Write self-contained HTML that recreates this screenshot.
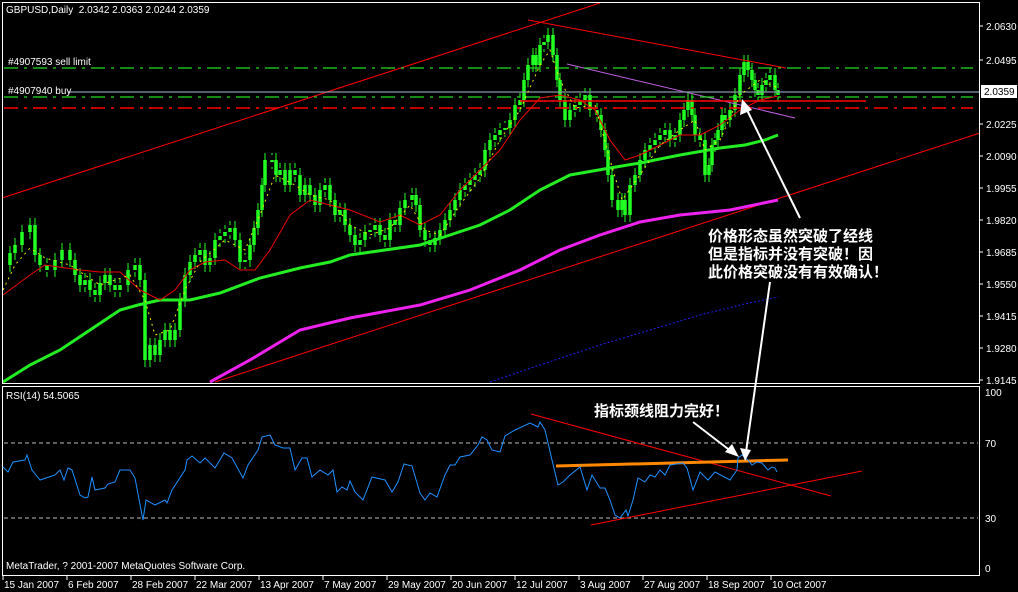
<!DOCTYPE html>
<html><head><meta charset="utf-8"><style>
html,body{margin:0;padding:0;background:#000;width:1018px;height:592px;overflow:hidden}
svg{display:block}
text{font-family:"Liberation Sans","Noto Sans CJK SC",sans-serif}
</style></head><body>
<svg width="1018" height="592" xmlns="http://www.w3.org/2000/svg">
<rect width="1018" height="592" fill="#000"/>
<defs>
<path id="cb" d="M10 265V253 M15 253V245 M22 245V232 M30 232V225 M35 225V255 M40 255V265 M47 265V270 M55 270V260 M62 260V250 M70 250V260 M75 260V275 M80 275V285 M85 285V280 M90 280V290 M95 290V295 M100 295V283 M105 283V275 M110 275V285 M115 285V290 M120 290V285 M128 285V270 M135 270V265 M140 265V280 M145 280V360 M150 360V345 M155 345V355 M160 355V340 M165 340V330 M170 330V340 M175 340V330 M180 330V300 M185 300V275 M190 275V262 M195 262V255 M200 255V250 M205 250V265 M210 265V258 M215 258V240 M220 240V236 M225 236V232 M230 232V228 M235 228V240 M240 240V262 M245 262V260 M250 260V245 M254 245V228 M258 228V210 M262 210V185 M265 185V160 M272 160V162 M276 160V175 M280 175V170 M285 170V185 M290 185V170 M295 170V175 M300 175V195 M305 195V185 M310 185V195 M315 195V205 M320 205V190 M325 190V185 M330 185V200 M335 200V215 M340 215V210 M345 210V225 M350 225V235 M355 235V245 M360 245V240 M365 240V232 M370 232V230 M375 230V225 M380 225V235 M385 235V240 M390 240V220 M395 220V225 M400 225V208 M405 208V200 M412 200V195 M416 195V205 M420 205V230 M425 230V240 M430 240V245 M435 245V238 M440 238V230 M445 230V220 M450 220V210 M455 210V200 M460 200V190 M465 190V185 M470 185V180 M475 180V175 M480 175V170 M485 170V150 M490 150V140 M495 140V135 M500 135V130 M505 130V128 M510 128V120 M515 120V105 M520 105V100 M524 100V80 M528 80V65 M533 65V55 M536 55V65 M540 65V45 M544 45V42 M548 42V35 M553 35V55 M557 55V80 M560 80V100 M565 100V120 M570 120V110 M575 110V105 M580 105V100 M585 100V95 M590 95V110 M597 110V115 M601 115V130 M605 130V150 M608 150V175 M612 175V200 M618 200V210 M622 210V200 M625 200V215 M630 215V185 M635 185V175 M640 175V160 M645 160V150 M650 150V145 M655 145V140 M660 140V135 M665 135V130 M670 130V140 M675 140V135 M680 135V120 M684 120V110 M688 110V100 M692 100V115 M695 115V135 M700 135V140 M705 140V175 M709 175V165 M712 165V145 M715 145V140 M718 140V130 M722 130V115 M725 115V120 M730 120V110 M735 110V95 M740 95V75 M744 75V62 M748 62V70 M752 70V80 M755 80V90 M758 90V95 M762 95V85 M766 85V80 M770 80V75 M775 75V90 M778 90V95"/>
</defs>
<g stroke="#2f2" fill="none">
<use href="#cb" stroke-width="1" transform="translate(0,-7)"/>
<use href="#cb" stroke-width="1" transform="translate(0,7)"/>
<use href="#cb" stroke-width="1"/>
<use href="#cb" stroke-width="3.5"/>
</g>
<line x1="2" y1="198" x2="600" y2="3" stroke="#f00" stroke-width="1"/>
<line x1="215" y1="382" x2="980" y2="133" stroke="#f00" stroke-width="1"/>
<line x1="528" y1="20" x2="786" y2="68" stroke="#f00" stroke-width="1"/>
<line x1="567" y1="64" x2="795" y2="118" stroke="#c060e0" stroke-width="1"/>
<line x1="4" y1="68" x2="973" y2="68" stroke="#2d2" stroke-width="1.3" stroke-dasharray="14,6,3,6"/>
<line x1="68" y1="92" x2="980" y2="92" stroke="#8898a8" stroke-width="1.2"/>
<line x1="4" y1="97" x2="973" y2="97" stroke="#2d2" stroke-width="1.3" stroke-dasharray="14,6,3,6"/>
<line x1="4" y1="108" x2="973" y2="108" stroke="#f00" stroke-width="1.5" stroke-dasharray="14,6,3,6"/>
<line x1="520" y1="101" x2="866" y2="101" stroke="#f00" stroke-width="1.5"/>
<polyline fill="none" stroke="#2e2" stroke-width="3" points="3,382 30,365 60,350 90,330 120,310 138,305 160,300 190,300 220,293 260,278 300,268 330,262 350,255 420,245 450,235 480,225 510,210 540,190 570,175 610,168 640,163 680,155 720,148 745,145 765,140 778,135"/>
<polyline fill="none" stroke="#e2e" stroke-width="3" points="210,382 250,360 300,330 350,318 420,305 470,290 520,270 560,250 600,235 640,222 680,215 730,210 778,200"/>
<polyline fill="none" stroke="#22e" stroke-width="1" stroke-dasharray="2,2" points="490,382 540,365 600,345 650,330 700,315 740,305 778,297"/>
<polyline fill="none" stroke="#e00" stroke-width="1" points="3,295 30,275 45,265 80,270 100,272 120,272 140,290 160,300 175,290 190,270 205,262 225,260 240,270 255,270 270,250 290,215 310,200 330,205 350,210 380,222 400,215 420,225 440,215 460,190 480,170 500,150 520,120 540,98 560,95 580,100 595,110 610,140 625,160 640,155 660,145 680,135 700,135 720,125 740,110 760,100 778,96"/>
<polyline fill="none" stroke="#ee0" stroke-width="1" stroke-dasharray="2,4" points="3,290 15,265 30,248 45,258 70,265 100,285 130,275 145,300 155,335 170,330 185,290 200,262 225,240 245,250 260,215 275,175 295,185 310,195 330,200 350,225 370,235 390,228 410,205 425,230 440,235 460,205 480,178 500,140 520,110 540,65 550,50 560,80 575,108 595,105 610,160 622,200 640,175 660,145 680,130 695,120 705,150 720,140 740,95 760,80 778,88"/>
<rect x="2.5" y="2.5" width="977" height="381" fill="none" stroke="#fff"/>
<rect x="2.5" y="386.5" width="977" height="189" fill="none" stroke="#fff"/>
<text x="6" y="13" fill="#fff" font-size="10">GBPUSD,Daily&#160; 2.0342 2.0363 2.0244 2.0359</text>
<text x="8" y="65" fill="#fff" font-size="10">#4907593 sell limit</text>
<text x="8" y="94" fill="#fff" font-size="10">#4907940 buy</text>
<g stroke="#fff"><path d="M980 26h3M980 60h3M980 124h3M980 156h3M980 188h3M980 220h3M980 252h3M980 284h3M980 316h3M980 348h3M980 380h3"/></g>
<g fill="#fff" font-size="10">
<text x="986" y="30">2.0630</text><text x="986" y="64">2.0495</text><text x="986" y="128">2.0225</text><text x="986" y="160">2.0090</text><text x="986" y="192">1.9955</text><text x="986" y="224">1.9820</text><text x="986" y="256">1.9685</text><text x="986" y="288">1.9550</text><text x="986" y="320">1.9415</text><text x="986" y="352">1.9280</text><text x="986" y="384">1.9145</text>
</g>
<rect x="981" y="85" width="36" height="13" fill="#fff"/>
<text x="984" y="95" fill="#000" font-size="10">2.0359</text>
<line x1="4" y1="443" x2="978" y2="443" stroke="#bbb" stroke-dasharray="4,3"/>
<line x1="4" y1="518" x2="978" y2="518" stroke="#bbb" stroke-dasharray="4,3"/>
<text x="6" y="399" fill="#fff" font-size="10">RSI(14) 54.5065</text>
<text x="985" y="396" fill="#fff" font-size="10">100</text>
<text x="985" y="447" fill="#fff" font-size="10">70</text>
<text x="985" y="522" fill="#fff" font-size="10">30</text>
<text x="985" y="572" fill="#fff" font-size="10">0</text>
<line x1="531" y1="414" x2="831" y2="496" stroke="#f00"/>
<line x1="591" y1="525" x2="862" y2="471" stroke="#f00"/>
<line x1="556" y1="466" x2="788" y2="460" stroke="#f80" stroke-width="3"/>
<polyline fill="none" stroke="#1e90ff" stroke-width="1" points="3,467 8,472 13,462 25,460 27,455 32,470 40,480 55,475 60,470 64,480 68,468 72,470 80,495 85,498 88,497 92,477 95,490 105,488 108,484 115,482 120,470 130,470 135,478 142,515 143,520 146,500 155,505 165,500 167,503 172,490 185,470 187,460 192,456 200,463 205,458 215,468 224,453 232,458 243,478 248,465 258,450 262,437 270,435 275,445 283,448 290,448 295,470 302,458 307,458 312,477 320,470 328,475 333,470 337,492 342,487 347,490 350,481 355,492 363,500 372,477 385,480 392,492 398,482 404,464 412,466 420,493 425,500 430,493 437,497 445,475 450,465 455,465 460,457 470,455 478,445 482,437 487,440 492,450 500,452 505,436 515,430 530,423 538,427 540,422 545,430 552,460 558,485 563,482 570,475 580,467 587,490 592,475 600,488 605,488 610,500 615,515 620,518 626,510 628,516 633,500 638,478 645,482 650,475 655,477 660,470 665,475 670,465 683,463 687,468 693,490 700,472 708,480 715,472 730,480 737,470 738,458 742,455 748,460 752,465 757,462 762,463 768,470 772,467 775,468 777,472"/>
<text x="6" y="569" fill="#fff" font-size="10">MetaTrader, ? 2001-2007 MetaQuotes Software Corp.</text>
<g stroke="#fff"><path d="M3 576v4M67 576v4M131 576v4M195 576v4M259 576v4M323 576v4M387 576v4M451 576v4M515 576v4M579 576v4M643 576v4M707 576v4M771 576v4"/></g>
<g fill="#fff" font-size="10">
<text x="4" y="588">15 Jan 2007</text><text x="68" y="588">6 Feb 2007</text><text x="132" y="588">28 Feb 2007</text><text x="196" y="588">22 Mar 2007</text><text x="260" y="588">13 Apr 2007</text><text x="324" y="588">7 May 2007</text><text x="388" y="588">29 May 2007</text><text x="452" y="588">20 Jun 2007</text><text x="516" y="588">12 Jul 2007</text><text x="580" y="588">3 Aug 2007</text><text x="644" y="588">27 Aug 2007</text><text x="708" y="588">18 Sep 2007</text><text x="772" y="588">10 Oct 2007</text>
</g>
<g fill="#fff" font-size="15" font-weight="bold">
<text x="708" y="241">价格形态虽然突破了经线</text>
<text x="708" y="259">但是指标并没有突破！因</text>
<text x="708" y="277">此价格突破没有有效确认！</text>
<text x="594" y="416">指标颈线阻力完好！</text>
</g>
<g stroke="#fff" stroke-width="2" fill="#fff">
<line x1="800" y1="218" x2="746" y2="108"/>
<polygon points="742,99 740,115 752,110" stroke="none"/>
<line x1="770" y1="282" x2="746" y2="452"/>
<polygon points="745,461 740,448 751,450" stroke="none"/>
<line x1="693" y1="422" x2="732" y2="452"/>
<polygon points="739,457 725,452 732,444" stroke="none"/>
</g>
</svg>
</body></html>
